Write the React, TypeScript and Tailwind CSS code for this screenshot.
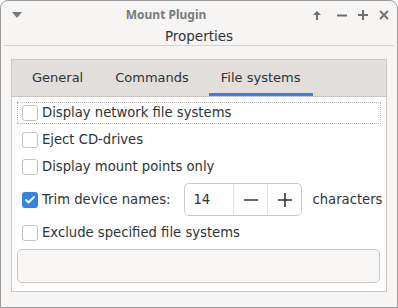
import { Check } from "lucide-react";

const font = { fontFamily: '"DejaVu Sans", sans-serif' };

const CheckRow = ({ label, checked = false, focus = false }: { label: string; checked?: boolean; focus?: boolean }) => (
    <div className={`flex items-center h-[22px] pl-[4px] whitespace-nowrap ${focus ? "border border-dotted border-[#b8b8b8] mr-[5px]" : "border border-transparent"}`}>
        {checked ? (
            <span className="w-[16px] h-[16px] rounded-[3px] bg-[#3584e4] flex items-center justify-center">
                <Check className="w-[12px] h-[12px] text-white" strokeWidth={4} />
            </span>
        ) : (
            <span className="w-[16px] h-[16px] rounded-[3px] border border-[#c6c2be] bg-white" />
        )}
        <span className="ml-[4px] text-[13.2px] text-[#2e3436]">{label}</span>
    </div>
);

export default function App() {
    return (
        <div style={font} className="w-[398px] h-[308px] bg-[#f6f5f4] border border-[#9c9c9c] rounded-t-[8px] flex flex-col overflow-hidden">
            {/* title bar */}
            <div className="h-[27px] flex items-center px-[10px] relative shrink-0">
                <svg width="10" height="6" viewBox="0 0 10 6" className="ml-[1px]"><path d="M0 0h10L5 6z" fill="#7b7b7b" /></svg>
                <div className="absolute inset-0 pr-[66px] flex items-center justify-center text-[12px] font-bold text-[#787b7d]" style={{ fontFamily: '"Noto Sans", sans-serif' }}>Mount Plugin</div>
                <div className="ml-auto flex items-center gap-[11px] text-[#6e6e6e] -mr-[2px]">
                    <svg width="10" height="10" viewBox="0 0 10 10" className="mr-[4px]"><path d="M5 2v8" stroke="currentColor" strokeWidth="2" /><path d="M1 5L5 1l4 4z" fill="currentColor" /></svg>
                    <svg width="10" height="10" viewBox="0 0 10 10"><path d="M0 5.5h10" stroke="currentColor" strokeWidth="2" /></svg>
                    <svg width="10" height="10" viewBox="0 0 10 10"><path d="M0 5h10M5 0v10" stroke="currentColor" strokeWidth="2" /></svg>
                    <svg width="10" height="10" viewBox="0 0 10 10"><path d="M1 1l8 8M9 1l-8 8" stroke="currentColor" strokeWidth="1.8" /></svg>
                </div>
            </div>
            <div className="h-[16px] flex items-center justify-center text-[13.5px] text-[#2e3436] shrink-0">Properties</div>
            <div className="mx-[3px] mt-[1px] border-t border-[#d8d4d0]" />

            {/* notebook */}
            <div className="mx-[10px] mt-[13px] h-[233px] border border-[#cdc7c2] flex flex-col">
                <div className="h-[37px] bg-[#e1dedb] border-b border-[#cdc7c2] flex items-stretch pl-[8px] gap-[8px] text-[13px] text-[#2e3436] shrink-0">
                    <div className="px-[12px] flex items-center">General</div>
                    <div className="px-[12px] flex items-center">Commands</div>
                    <div className="px-[12px] flex items-center relative">
                        File systems
                        <span className="absolute left-0 right-0 bottom-0 h-[3px] bg-[#3584e4]" />
                    </div>
                </div>
                <div className="flex-1 bg-white pl-[5px] pt-[5px] flex flex-col">
                    <CheckRow label="Display network file systems" focus />
                    <div className="mt-[5px]"><CheckRow label="Eject CD-drives" /></div>
                    <div className="mt-[5px]"><CheckRow label="Display mount points only" /></div>
                    <div className="mt-[5px] flex items-center">
                        <CheckRow label="Trim device names:" checked />
                        <div className="ml-[13px] h-[33px] w-[118px] border border-[#cdc7c2] rounded-[5px] flex items-stretch text-[13.2px] text-[#2e3436]">
                            <div className="w-[48px] pl-[8px] flex items-center">14</div>
                            <div className="w-[34px] border-l border-[#e3e0dd] flex items-center justify-center">
                                <svg width="14" height="14" viewBox="0 0 14 14"><path d="M0 7h14" stroke="#2e3436" strokeWidth="1.6" /></svg>
                            </div>
                            <div className="flex-1 border-l border-[#e3e0dd] flex items-center justify-center">
                                <svg width="14" height="14" viewBox="0 0 14 14"><path d="M0 7h14M7 0v14" stroke="#2e3436" strokeWidth="1.6" /></svg>
                            </div>
                        </div>
                        <span className="ml-[10px] text-[13.2px] text-[#2e3436] whitespace-nowrap">characters</span>
                    </div>
                    <div className="mt-[6px]"><CheckRow label="Exclude specified file systems" /></div>
                    <div className="mt-[5px] mr-[6px] h-[34px] rounded-[5px] border border-[#cdc7c2] bg-[#f8f7f6]" />
                </div>
            </div>
        </div>
    );
}
